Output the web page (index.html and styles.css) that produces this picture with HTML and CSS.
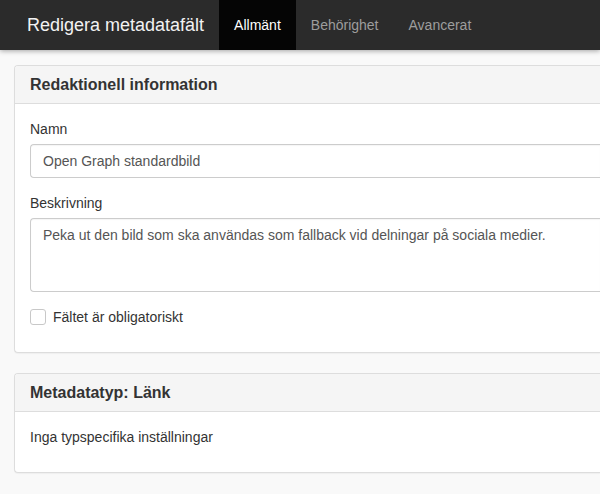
FILE: index.html
```html
<!DOCTYPE html>
<html lang="sv">
<head>
<meta charset="utf-8">
<title>Redigera metadatafält</title>
<link rel="stylesheet" href="styles.css">
</head>
<body>
<nav class="navbar">
  <div class="brand">Redigera metadatafält</div>
  <ul class="tabs">
    <li class="tab active">Allmänt</li>
    <li class="tab">Behörighet</li>
    <li class="tab">Avancerat</li>
  </ul>
</nav>
<main class="content">
  <section class="panel">
    <div class="panel-heading"><h3>Redaktionell information</h3></div>
    <div class="panel-body">
      <div class="form-group">
        <label class="label">Namn</label>
        <div class="input">Open Graph standardbild</div>
      </div>
      <div class="form-group">
        <label class="label">Beskrivning</label>
        <div class="textarea">Peka ut den bild som ska användas som fallback vid delningar på sociala medier.</div>
      </div>
      <div class="checkbox">
        <span class="box"></span>
        <span>Fältet är obligatoriskt</span>
      </div>
    </div>
  </section>
  <section class="panel">
    <div class="panel-heading"><h3>Metadatatyp: Länk</h3></div>
    <div class="panel-body">
      <p class="text">Inga typspecifika inställningar</p>
    </div>
  </section>
</main>
</body>
</html>
```

FILE: styles.css
```css
* { box-sizing: border-box; }
html, body {
  margin: 0;
  padding: 0;
  overflow: hidden;
}
body {
  background: #f9f9f9;
  font-family: "Liberation Sans", Arial, sans-serif;
  font-size: 14px;
  line-height: 20px;
  color: #333;
  width: 600px;
  height: 494px;
}
.navbar {
  height: 50px;
  background: #2b2b2b;
  display: flex;
  align-items: stretch;
  padding-left: 12px;
  box-shadow: 0 1px 5px rgba(0, 0, 0, 0.35);
  position: relative;
  z-index: 1;
}
.brand {
  font-size: 18px;
  color: #f2f2f2;
  padding: 15px;
  line-height: 20px;
}
.tabs {
  list-style: none;
  margin: 0;
  padding: 0;
  display: flex;
}
.tab {
  padding: 15px;
  line-height: 20px;
  color: #9d9d9d;
}
.tab.active {
  background: #050505;
  color: #fff;
}
.content {
  padding: 15px 0 0 14px;
}
.panel {
  width: 100%;
  background: #fff;
  border: 1px solid #ddd;
  border-right: 0;
  border-radius: 4px 0 0 4px;
  margin-bottom: 20px;
  box-shadow: 0 1px 1px rgba(0, 0, 0, 0.04);
}
.panel-heading {
  background: #f5f5f5;
  border-bottom: 1px solid #ddd;
  padding: 10px 15px;
  border-radius: 3px 0 0 0;
}
.panel-heading h3 {
  margin: 0;
  font-size: 16px;
  line-height: 17px;
  font-weight: bold;
  color: #333;
}
.panel-body {
  padding: 15px 0 15px 15px;
}
.form-group {
  margin-bottom: 15px;
}
.label {
  display: block;
  margin-bottom: 5px;
  font-weight: normal;
}
.input, .textarea {
  border: 1px solid #ccc;
  border-right: 0;
  border-radius: 4px 0 0 4px;
  padding: 6px 0 6px 12px;
  color: #555;
  background: #fff;
  box-shadow: inset 0 1px 1px rgba(0, 0, 0, 0.04);
  white-space: nowrap;
  overflow: hidden;
}
.input {
  height: 34px;
}
.textarea {
  height: 74px;
}
.checkbox {
  display: flex;
  align-items: center;
  gap: 7px;
  margin-bottom: 10px;
}
.box {
  width: 16px;
  height: 16px;
  border: 1px solid #c8c8c8;
  border-radius: 3px;
  background: #fff;
}
.text {
  margin: 0 0 10px;
}
```
